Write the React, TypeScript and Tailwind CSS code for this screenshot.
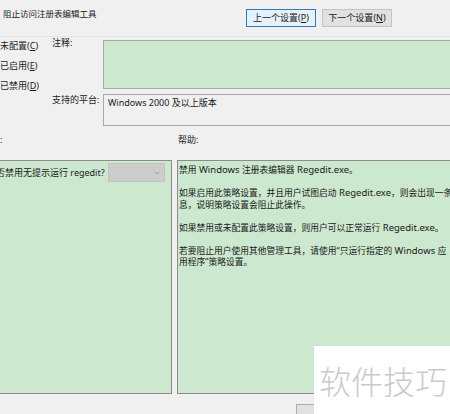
const font = "font-['Noto_Sans','Noto_Sans_CJK_SC',sans-serif]";

function Key({ k }: { k: string }) {
  return (
    <>
      (<span className="underline">{k}</span>)
    </>
  );
}

// latin runs in the help text are set a little larger than the CJK text, as in the dialog
function Mixed({ text }: { text: string }) {
  const parts = text.split(/([\x20-\x7e]+)/);
  return (
    <>
      {parts.map((p, i) =>
        /^[\x20-\x7e]+$/.test(p) ? (
          <span key={i} className="text-[9.5px]">
            {p}
          </span>
        ) : (
          <span key={i} className="text-[8.75px]">
            {p}
          </span>
        ),
      )}
    </>
  );
}

const helpLines: (string | null)[] = [
  "禁用 Windows 注册表编辑器 Regedit.exe。",
  null,
  "如果启用此策略设置，并且用户试图启动 Regedit.exe，则会出现一条消",
  "息，说明策略设置会阻止此操作。",
  null,
  "如果禁用或未配置此策略设置，则用户可以正常运行 Regedit.exe。",
  null,
  "若要阻止用户使用其他管理工具，请使用“只运行指定的 Windows 应",
  "用程序”策略设置。",
];

export default function App() {
  return (
    <div
      className={`relative w-[450px] h-[414px] overflow-hidden bg-[#f0f0f0] text-[9px] text-[#1a1a1a] ${font}`}
    >
      {/* header */}
      <div className="flex h-[37px] border-b border-[#e4e4e4]">
        <div className="w-[246px] shrink-0 pl-[3px] pt-[8px] text-[8.5px] leading-[11px] whitespace-nowrap">
          阻止访问注册表编辑工具
        </div>
        <div className="mt-[9px] flex gap-[6px] shrink-0">
          <button className="w-[70px] h-[18px] border border-[#2f7ab8] bg-[#e5f1fb] leading-[16px] whitespace-nowrap">
            上一个设置<Key k="P" />
          </button>
          <button className="w-[70px] h-[18px] border border-[#c4c4c4] bg-[#e1e1e1] leading-[16px] whitespace-nowrap">
            下一个设置<Key k="N" />
          </button>
        </div>
      </div>

      {/* state + comment + platform */}
      <div className="flex">
        <div className="w-[52px] shrink-0 -mt-[1px] flex flex-col whitespace-nowrap">
          <div className="h-[20px] leading-[20px]">
            未配置<Key k="C" />
          </div>
          <div className="h-[20px] leading-[20px]">
            已启用<Key k="E" />
          </div>
          <div className="h-[20px] leading-[20px]">
            已禁用<Key k="D" />
          </div>
        </div>
        <div className="flex flex-col shrink-0">
          <div className="flex">
            <div className="w-[51px] shrink-0 leading-[12px]">注释:</div>
            <div className="mt-[3px] h-[49px] w-[360px] shrink-0 border border-[#a8a8a8] bg-[#cce8cf]" />
          </div>
          <div className="flex mt-[5px]">
            <div className="w-[51px] shrink-0 leading-[12px] whitespace-nowrap">支持的平台:</div>
            <div className="h-[32px] w-[360px] shrink-0 border border-[#a8a8a8] bg-[#f0f0f0] pl-[4px] pt-[2px] leading-[12px] whitespace-nowrap">
              Windows 2000 及以上版本
            </div>
          </div>
        </div>
      </div>

      {/* section labels */}
      <div className="flex mt-[4px] h-[20px] leading-[20px]">
        <div className="w-[196px] shrink-0 -ml-[18px] whitespace-nowrap">选项:</div>
        <div className="shrink-0">帮助:</div>
      </div>

      {/* panels */}
      <div className="flex mt-[10px]">
        <div className="-ml-[1px] w-[173px] shrink-0 h-[234px] border border-[#8c8c8c] bg-[#cce8cf] overflow-hidden">
          <div className="mt-[2px] flex items-center h-[19px]">
            <div className="-ml-[13px] w-[121px] shrink-0 whitespace-nowrap leading-[12px]">
              是否禁用无提示运行 regedit?
            </div>
            <div className="w-[57px] shrink-0 h-[19px] border border-[#c2c2c2] bg-[#cccccc] flex items-center justify-end pr-[4px]">
              <svg width="6" height="4" viewBox="0 0 6 4">
                <path d="M0.5 0.5 L3 3 L5.5 0.5" fill="none" stroke="#a0a0a0" strokeWidth="1" />
              </svg>
            </div>
          </div>
        </div>
        <div className="ml-[5px] w-[280px] shrink-0 h-[234px] border border-[#8c8c8c] bg-[#cce8cf] overflow-hidden pl-[1px] pt-[3px]">
          {helpLines.map((l, i) => (
            <div key={i} className="h-[11.5px] leading-[11.5px] whitespace-nowrap">
              {l ? <Mixed text={l} /> : ""}
            </div>
          ))}
        </div>
      </div>

      {/* bottom buttons */}
      <div className="flex">
        <div className="ml-[296px] mt-[10px] w-[70px] h-[18px] shrink-0 border border-[#adadad] bg-[#e1e1e1]" />
      </div>

      {/* watermark */}
      <div className="absolute left-[314px] top-[346px] w-[136px] h-[68px] bg-white">
        <div className="pl-[5px] pt-[14px] text-[32px] leading-[40px] text-[#cacaca] whitespace-nowrap font-['Noto_Sans_CJK_SC',sans-serif] font-light">
          软件技巧
        </div>
      </div>
    </div>
  );
}
